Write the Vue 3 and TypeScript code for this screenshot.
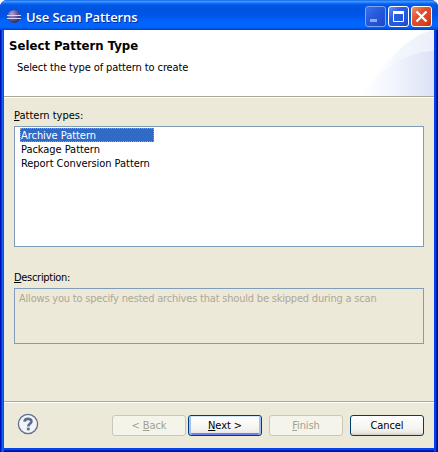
<script setup lang="ts">
import { ref } from 'vue'

interface PatternType {
  name: string
  description: string
}

const patterns: PatternType[] = [
  { name: 'Archive Pattern', description: 'Allows you to specify nested archives that should be skipped during a scan' },
  { name: 'Package Pattern', description: '' },
  { name: 'Report Conversion Pattern', description: '' },
]
const selected = ref(0)
</script>

<template>
  <div class="window">
    <header class="titlebar">
      <svg class="logo" width="16" height="16" viewBox="0 0 16 16">
        <defs>
          <radialGradient id="orb" cx=".35" cy=".3" r=".75">
            <stop offset="0" stop-color="#b0a6d0" />
            <stop offset=".5" stop-color="#6a5a9c" />
            <stop offset="1" stop-color="#332663" />
          </radialGradient>
        </defs>
        <circle cx="8" cy="7.500" r="6.500" fill="url(#orb)" />
        <path d="M1 6.500h14M1 9.500h14" stroke="#d5d6f2" stroke-width="1" />
      </svg>
      <span class="title">Use Scan Patterns</span>
      <div class="controls">
        <span class="control dim">
          <svg width="21" height="21"><rect x="5" y="13" width="7" height="3" fill="#8fa8f0" /></svg>
        </span>
        <span class="control">
          <svg width="21" height="21"><path d="M5.500 5v10.500h10V5" fill="none" stroke="#fff" /><rect x="5" y="5" width="11" height="3" fill="#fff" /></svg>
        </span>
        <span class="control close">
          <svg width="21" height="21"><path d="M5.500 5.500l10 10M15.500 5.500l-10 10" stroke="#fff" stroke-width="2.300" /></svg>
        </span>
      </div>
    </header>

    <section class="banner">
      <div class="banner-text">
        <h1>Select Pattern Type</h1>
        <p>Select the type of pattern to create</p>
      </div>
      <svg class="swoosh" width="74" height="66" viewBox="0 0 74 66">
        <defs>
          <linearGradient id="outer" x1="0" x2="1">
            <stop offset="0" stop-color="#fff" />
            <stop offset="1" stop-color="#f0f4fc" />
          </linearGradient>
          <linearGradient id="middle" x1="0" x2="1">
            <stop offset="0" stop-color="#f6f9fe" />
            <stop offset="1" stop-color="#eaeff9" />
          </linearGradient>
          <linearGradient id="inner" x1="0" x2="1">
            <stop offset="0" stop-color="#fff" />
            <stop offset=".4" stop-color="#f3f6fd" />
            <stop offset="1" stop-color="#dbe2f5" />
          </linearGradient>
        </defs>
        <path d="M2 66C16 41 42 9 74 0V66Z" fill="url(#outer)" />
        <path d="M28 37C37 19 52 5 74 0V24Z" fill="url(#middle)" />
        <path d="M2 66C16 44 42 22 74 21V66Z" fill="url(#inner)" />
      </svg>
    </section>

    <main class="content">
      <label class="label types"><u>P</u>attern types:</label>
      <ul class="list">
        <li
          v-for="(p, i) in patterns"
          :key="p.name"
          :class="{ selected: i === selected }"
          @click="selected = i"
        >{{ p.name }}</li>
      </ul>
      <label class="label second"><u>D</u>escription:</label>
      <div class="description">{{ patterns[selected].description }}</div>
    </main>

    <footer class="footer">
      <svg class="help" width="22" height="22" viewBox="0 0 22 22">
        <circle cx="11" cy="11" r="9.600" fill="#f3f4f8" stroke="#5d6d8e" stroke-width="1.300" />
        <path d="M7.600 8.700C7.600 4.900 14.400 4.900 14.400 8.500C14.400 10.900 11.300 10.700 11.300 13.500" fill="none" stroke="#5d6d8e" stroke-width="2.700" />
        <rect x="9.900" y="14.700" width="2.800" height="2.600" fill="#5d6d8e" />
      </svg>
      <button class="btn back" disabled><span>&lt; <u>B</u>ack</span></button>
      <button class="btn next"><span><u>N</u>ext &gt;</span></button>
      <button class="btn finish" disabled><span><u>F</u>inish</span></button>
      <button class="btn cancel"><span>Cancel</span></button>
    </footer>
  </div>
</template>

<style>
body {
  background: #fff;
}
</style>

<style scoped>
* {
  box-sizing: border-box;
}
.window {
  width: 438px;
  height: 452px;
  display: flex;
  flex-direction: column;
  padding: 0 4px 4px;
  border-radius: 7px 7px 0 0;
  overflow: hidden;
  background:
    linear-gradient(90deg, #0010b8 0 1px, #0734d8 1px 2px, #1664ee 2px 3px, #0855dd 3px 4px, transparent 4px 434px, #0040f0 434px 436px, #001fb0 436px 437px, #00138c 437px),
    linear-gradient(180deg, #0050e8 0 448px, #0045f0 448px 450px, #001fb0 450px 451px, #00138c 451px);
  font: 11px/14px 'DejaVu Sans Condensed', 'DejaVu Sans', sans-serif;
  font-stretch: condensed;
  letter-spacing: -0.1px;
  color: #000;
}
.titlebar {
  flex: none;
  height: 30px;
  margin: 0 -4px;
  padding: 3px 6px 0 6px;
  display: flex;
  align-items: center;
  background: linear-gradient(180deg, #0a55dd 0, #3d95ff 1px, #3d95ff 2px, #1470f5 3px, #0058e6 5px, #0053e1 10px, #0055e8 16px, #0065fc 22px, #0066ff 26px, #005bf0 28px, #003dcc 30px);
}
.logo {
  flex: none;
}
.title {
  margin-left: 4px;
  font: 600 13px/18px 'Open Sans', 'Noto Sans', sans-serif;
  letter-spacing: -0.1px;
  color: #fff;
  text-shadow: 1px 1px #0b2a9c;
  white-space: nowrap;
}
.controls {
  margin-left: auto;
  display: flex;
  gap: 2px;
}
.control {
  width: 21px;
  height: 21px;
  border: 1px solid #fff;
  border-radius: 3px;
  background: linear-gradient(135deg, #6b94f5, #2a5fe3 35%, #2257dd 75%, #1a48bc);
}
.control svg {
  display: block;
  margin: -1px;
}
.dim {
  border-color: #7fa2f3;
  background: linear-gradient(135deg, #3b70e8, #2558dc 50%, #1c48c4);
}
.close {
  background: linear-gradient(135deg, #f0916f, #e1502d 40%, #d8431e 75%, #b63211);
}
.banner {
  flex: none;
  height: 68px;
  display: flex;
  justify-content: space-between;
  background: #fff;
  border-bottom: 1px solid #fff;
  box-shadow: inset 0 -1px #aca899;
}
.banner-text {
  padding: 8px 0 0 5px;
  white-space: nowrap;
}
h1 {
  margin: 0;
  font-size: 13px;
  line-height: 16px;
  letter-spacing: 0.03px;
}
p {
  margin: 7px 0 0 8px;
}
.swoosh {
  flex: none;
}
.content {
  flex: 1;
  padding: 11px 10px 0;
  background: #ece9d8;
}
.label {
  display: block;
  letter-spacing: -0.3px;
}
.label.types {
  letter-spacing: 0;
}
.label.second {
  margin-top: 24px;
}
u {
  text-decoration: underline;
  text-underline-offset: 1px;
  text-decoration-thickness: 1px;
}
.list {
  height: 121px;
  margin: 3px 0 0;
  padding: 1px 5px;
  list-style: none;
  background: #fff;
  border: 1px solid #7f9db9;
}
.list li {
  width: 134px;
  height: 14px;
  padding: 0 1px;
  line-height: 16px;
  letter-spacing: -0.05px;
  white-space: nowrap;
}
.list .selected {
  background: #316ac5;
  color: #fff;
  outline: 1px dotted #ce953a;
  outline-offset: -1px;
}
.description {
  height: 56px;
  margin-top: 3px;
  padding: 3px 4px;
  border: 1px solid #7f9db9;
  letter-spacing: -0.2px;
  color: #aca899;
  white-space: nowrap;
}
.footer {
  flex: none;
  height: 47px;
  display: flex;
  align-items: flex-start;
  padding: 11px 10px 0 13px;
  background: #ece9d8;
  border-top: 1px solid #aca899;
  box-shadow: inset 0 1px #fff;
}
.help {
  margin-right: auto;
}
.btn {
  width: 74px;
  height: 21px;
  margin: 2px 0 0 2px;
  padding: 1px 0 0;
  border: 1px solid #003c74;
  border-radius: 3px;
  background: linear-gradient(180deg, #fff, #f5f4ef 65%, #ecebe5 85%, #d6d0c5);
  font: inherit;
  letter-spacing: inherit;
  color: #000;
}
.btn:disabled {
  border-color: #c9c7ba;
  background: #f5f4ea;
  color: #a1a192;
}
.next {
  box-shadow: inset 0 1px #cee7ff, inset 2px 0 #a3bff0, inset -2px 0 #a3bff0, inset 0 -2px #6982ee;
}
.finish,
.cancel {
  margin-left: 7px;
}
</style>
